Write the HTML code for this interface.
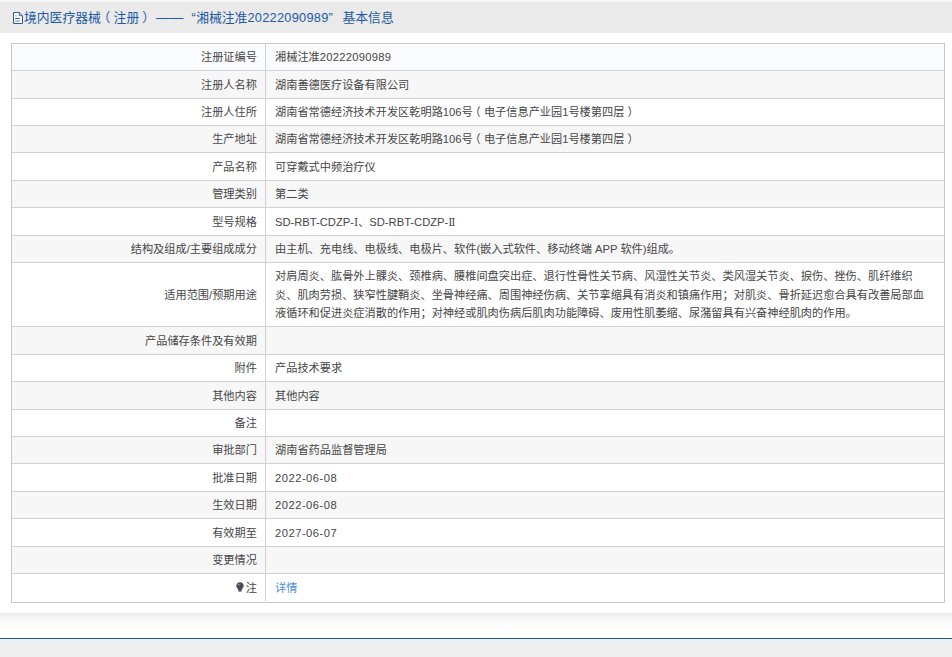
<!DOCTYPE html>
<html lang="zh-CN">
<head>
<meta charset="utf-8">
<title>境内医疗器械（注册）基本信息</title>
<style>
html,body{margin:0;padding:0;}
body{width:952px;height:657px;position:relative;overflow:hidden;background:#fff;
  font-family:"Liberation Sans","Noto Sans CJK SC",sans-serif;font-size:11.2px;color:#464646;}
.top{position:absolute;left:0;top:0;width:952px;height:2px;background:#f8f8f8;}
.hd{position:absolute;left:0;top:2px;width:952px;height:31px;background:#eaeaea;}
.hd .ico{position:absolute;left:13px;top:10px;width:10px;height:12px;}
.hd .t{position:absolute;left:24px;top:0;height:31px;line-height:31px;font-size:12.8px;color:#1c5aa6;white-space:nowrap;}
.hd .t>span{position:absolute;top:0;}
#t1{left:0;}#t2{left:132px;transform-origin:0 50%;transform:scaleX(1.066);}#t3{left:167.5px;}#t4{left:172.2px;}#t5{left:304.5px;}#t6{left:318.5px;}
.tb{position:absolute;left:11px;top:43px;width:932px;height:558px;border:1px solid #c8c8c8;}
.r{position:absolute;left:0;width:932px;border-top:1px solid #d2d2d2;box-sizing:border-box;}
.r.first{border-top:0;}
.l,.v{position:absolute;top:0;bottom:0;box-sizing:border-box;white-space:nowrap;display:flex;align-items:center;line-height:18.5px;padding-top:1px;}
.l{left:0;width:253px;justify-content:flex-end;padding-right:8.1px;}
.v{left:253px;width:679px;border-left:1px solid #d2d2d2;padding-left:9px;}
.o{background:#fff;}
.e{background:#f7f7f7;}
.h{background:#fafbfd;}
a{color:#4a8fe0;text-decoration:none;}
.rn{font-family:"DejaVu Serif","Liberation Serif",serif;font-size:10.6px;}
.n1{letter-spacing:0.28px;}
.n2{letter-spacing:0.26px;}
.dt{letter-spacing:0.5px;}
.pl{position:relative;left:-3.2px;}
.pr{position:relative;left:3.2px;}
.bulb{width:8px;height:10px;margin-right:1.7px;position:relative;top:0.3px;}
.ft-shadow{position:absolute;left:0;top:613px;width:952px;height:25px;background:linear-gradient(#ebebeb 0%,#f3f3f3 14%,#fafafa 36%,#fefefc 58%,#fffffe 100%);}
.ft-line{position:absolute;left:0;top:638px;width:952px;height:1px;background:#2f537d;}
.ft-line2{position:absolute;left:0;top:639px;width:952px;height:1px;background:#dcf6fd;}
.ft-line3{position:absolute;left:0;top:640px;width:952px;height:1px;background:#e5eff8;}
.ft{position:absolute;left:0;top:641px;width:952px;height:16px;background:#efefef;}
</style>
</head>
<body>
<div class="top"></div>
<div class="hd">
<svg class="ico" viewBox="0 0 10 12">
<path d="M0.5 0.5 H6.3 L9.5 3.7 V11.5 H0.5 Z" fill="#fdfeff" stroke="#2b5b9d" stroke-width="1"/>
<path d="M6.3 0.5 V3.7 H9.5" fill="#c9d6e8" stroke="#2b5b9d" stroke-width="0.9"/>
<rect x="2.2" y="3.4" width="1.6" height="1" fill="#8c98a8"/>
<rect x="2.2" y="6" width="4.6" height="1" fill="#2b5b9d"/>
<rect x="2.2" y="8.3" width="4.6" height="1.7" fill="#a3b4cc"/>
</svg>
<div class="t"><span id="t1">境内医疗器械<span class="pl">（</span>注册<span class="pr">）</span></span><span id="t2">——</span><span id="t3">“</span><span id="t4">湘械注准<span class="n2">20222090989</span></span><span id="t5">”</span><span id="t6">基本信息</span></div>
</div>
<div class="tb">
<div class="r first h" style="top:0px;height:26px"><div class="l"><span>注册证编号</span></div><div class="v"><span>湘械注准<span class="n1">20222090989</span></span></div></div>
<div class="r e" style="top:26px;height:28px"><div class="l"><span>注册人名称</span></div><div class="v"><span>湖南善德医疗设备有限公司</span></div></div>
<div class="r o" style="top:54px;height:27px"><div class="l"><span>注册人住所</span></div><div class="v"><span>湖南省常德经济技术开发区乾明路106号<span class="pl">（</span>电子信息产业园1号楼第四层<span class="pr">）</span></span></div></div>
<div class="r e" style="top:81px;height:27px"><div class="l"><span>生产地址</span></div><div class="v"><span>湖南省常德经济技术开发区乾明路106号<span class="pl">（</span>电子信息产业园1号楼第四层<span class="pr">）</span></span></div></div>
<div class="r o" style="top:108px;height:28px"><div class="l"><span>产品名称</span></div><div class="v"><span>可穿戴式中频治疗仪</span></div></div>
<div class="r e" style="top:136px;height:27px"><div class="l"><span>管理类别</span></div><div class="v"><span>第二类</span></div></div>
<div class="r o" style="top:163px;height:28px"><div class="l"><span>型号规格</span></div><div class="v"><span><span class="md">SD-RBT-CDZP-<span class="rn">Ⅰ</span></span>、<span class="md">SD-RBT-CDZP-<span class="rn">Ⅱ</span></span></span></div></div>
<div class="r e" style="top:191px;height:27px"><div class="l"><span>结构及组成/主要组成成分</span></div><div class="v"><span>由主机、充电线、电极线、电极片、软件(嵌入式软件、移动终端 APP 软件)组成。</span></div></div>
<div class="r o" style="top:218px;height:64px"><div class="l"><span>适用范围/预期用途</span></div><div class="v"><span>对肩周炎、肱骨外上髁炎、颈椎病、腰椎间盘突出症、退行性骨性关节病、风湿性关节炎、类风湿关节炎、捩伤、挫伤、肌纤维织<br>炎、肌肉劳损、狭窄性腱鞘炎、坐骨神经痛、周围神经伤病、关节挛缩具有消炎和镇痛作用；对肌炎、骨折延迟愈合具有改善局部血<br>液循环和促进炎症消散的作用；对神经或肌肉伤病后肌肉功能障碍、废用性肌萎缩、尿潴留具有兴奋神经肌肉的作用。</span></div></div>
<div class="r e" style="top:282px;height:28px"><div class="l"><span>产品储存条件及有效期</span></div><div class="v"><span></span></div></div>
<div class="r o" style="top:310px;height:27px"><div class="l"><span>附件</span></div><div class="v"><span>产品技术要求</span></div></div>
<div class="r e" style="top:337px;height:28px"><div class="l"><span>其他内容</span></div><div class="v"><span>其他内容</span></div></div>
<div class="r o" style="top:365px;height:27px"><div class="l"><span>备注</span></div><div class="v"><span></span></div></div>
<div class="r e" style="top:392px;height:27px"><div class="l"><span>审批部门</span></div><div class="v"><span>湖南省药品监督管理局</span></div></div>
<div class="r o" style="top:419px;height:28px"><div class="l"><span>批准日期</span></div><div class="v"><span><span class="dt">2022-06-08</span></span></div></div>
<div class="r e" style="top:447px;height:27px"><div class="l"><span>生效日期</span></div><div class="v"><span><span class="dt">2022-06-08</span></span></div></div>
<div class="r o" style="top:474px;height:28px"><div class="l"><span>有效期至</span></div><div class="v"><span><span class="dt">2027-06-07</span></span></div></div>
<div class="r e" style="top:502px;height:27px"><div class="l"><span>变更情况</span></div><div class="v"><span></span></div></div>
<div class="r o" style="top:529px;height:28px"><div class="l"><span><svg class="bulb" viewBox="0 0 8 10"><path d="M4 0.2C1.8 0.2 0.3 1.8 0.3 3.8C0.3 5.2 1.2 6.2 2 7.2C2.3 7.6 2.4 8 2.4 8.4V9.3H5.6V8.4C5.6 8 5.7 7.6 6 7.2C6.8 6.2 7.7 5.2 7.7 3.8C7.7 1.8 6.2 0.2 4 0.2Z" fill="#4b4b55"/><circle cx="2.7" cy="2.6" r="0.9" fill="#9a9aa6"/><rect x="2.6" y="9.2" width="2.8" height="0.8" fill="#8a8a92"/></svg>注</span></div><div class="v"><span><a>详情</a></span></div></div>
</div>
<div class="ft-shadow"></div>
<div class="ft-line"></div>
<div class="ft-line2"></div>
<div class="ft-line3"></div>
<div class="ft"></div>
</body>
</html>
